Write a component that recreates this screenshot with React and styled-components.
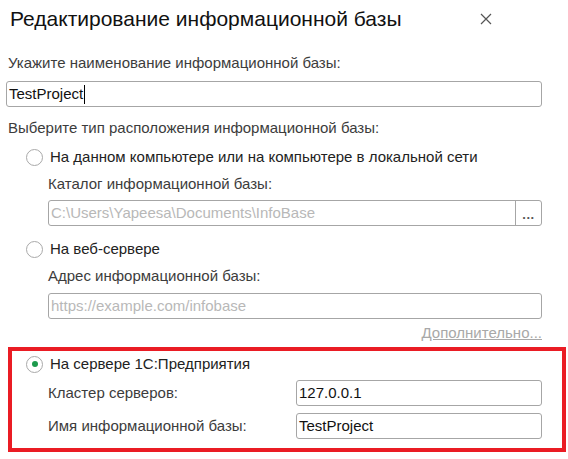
import React from 'react';
import styled, { createGlobalStyle } from 'styled-components';

const GlobalStyle = createGlobalStyle`
  html, body {
    margin: 0;
    padding: 0;
    background: #fff;
  }
  body {
    font-family: "Liberation Sans", Arial, sans-serif;
    color: #333;
  }
`;

function Radio({ checked, label, indent = 20 }) {
  return (
    <RadioRow indent={indent}>
      <Circle checked={checked} />
      <RadioText>{label}</RadioText>
    </RadioRow>
  );
}

export default function App() {
  return (
    <>
      <GlobalStyle />
      <Window>
        <Header>
          <Title>Редактирование информационной базы</Title>
          <Close aria-label="Закрыть">
            <svg width="12" height="12" viewBox="0 0 12 12">
              <path d="M1 1L11 11M11 1L1 11" stroke="#555" strokeWidth="1.2" />
            </svg>
          </Close>
        </Header>

        <Body>
          <Label top={16}>Укажите наименование информационной базы:</Label>
          <Field top={9}>
            <Value>TestProject</Value>
            <Caret />
          </Field>

          <Label top={12}>Выберите тип расположения информационной базы:</Label>

          <Option top={10}>
            <Radio label="На данном компьютере или на компьютере в локальной сети" />
            <Sub>
              <Label top={8}>Каталог информационной базы:</Label>
              <Field top={7}>
                <Placeholder>C:\Users\Yapeesa\Documents\InfoBase</Placeholder>
                <Choose>...</Choose>
              </Field>
            </Sub>
          </Option>

          <Option top={13}>
            <Radio label="На веб-сервере" />
            <Sub>
              <Label top={8}>Адрес информационной базы:</Label>
              <Field top={8}>
                <Placeholder>https://example.com/infobase</Placeholder>
              </Field>
            </Sub>
          </Option>

          <MoreLink href="#">Дополнительно...</MoreLink>
        </Body>

        <Highlight>
          <Radio checked indent={14} label="На сервере 1С:Предприятия" />
          <ServerGrid>
            <GridLabel>Кластер серверов:</GridLabel>
            <Field>
              <Value>127.0.0.1</Value>
            </Field>
            <GridLabel>Имя информационной базы:</GridLabel>
            <Field>
              <Value>TestProject</Value>
            </Field>
          </ServerGrid>
        </Highlight>
      </Window>
    </>
  );
}

const Window = styled.div`
  width: 568px;
  height: 459px;
  box-sizing: border-box;
  padding: 0 2px 0 6px;
  overflow: hidden;
`;

const Header = styled.div`
  height: 38px;
  display: flex;
  align-items: center;
  justify-content: space-between;
  padding-right: 74px;
`;

const Title = styled.h1`
  margin: 0 0 0 4px;
  font-size: 21px;
  line-height: 28px;
  font-weight: normal;
  color: #111;
`;

const Close = styled.button`
  border: none;
  background: none;
  padding: 0;
  width: 12px;
  height: 12px;
  display: flex;
  cursor: pointer;
`;

const Body = styled.div`
  display: flex;
  flex-direction: column;
  padding-right: 24px;
`;

const Label = styled.div`
  margin-top: ${(p) => p.top || 0}px;
  padding-left: 2px;
  font-size: 15px;
  line-height: 18px;
  color: #3c3c3c;
`;

const Field = styled.div`
  margin-top: ${(p) => p.top || 0}px;
  height: 26px;
  box-sizing: border-box;
  border: 1px solid #a6a6a6;
  border-radius: 3px;
  display: flex;
  align-items: center;
  padding-left: 2px;
  font-size: 15px;
  overflow: hidden;
`;

const Value = styled.span`
  color: #111;
  line-height: 18px;
`;

const Caret = styled.span`
  width: 1px;
  height: 19px;
  background: #000;
  margin-left: 1px;
`;

const Placeholder = styled.span`
  flex: 1;
  color: #b8b8b8;
  line-height: 18px;
`;

const Choose = styled.span`
  width: 26px;
  align-self: stretch;
  border-left: 1px solid #a6a6a6;
  display: flex;
  align-items: center;
  justify-content: center;
  font-size: 13px;
  font-weight: bold;
  color: #555;
  letter-spacing: 0.5px;
  padding-top: 3px;
  box-sizing: border-box;
`;

const Option = styled.div`
  margin-top: ${(p) => p.top || 0}px;
  display: flex;
  flex-direction: column;
`;

const RadioRow = styled.div`
  height: 20px;
  display: flex;
  align-items: center;
  gap: 7px;
  padding-left: ${(p) => p.indent}px;
`;

const Circle = styled.span`
  width: 17px;
  height: 17px;
  box-sizing: border-box;
  border-radius: 50%;
  border: 1px solid #a9a9a9;
  background: #fff;
  display: flex;
  align-items: center;
  justify-content: center;
  &::after {
    content: '';
    width: 6px;
    height: 6px;
    border-radius: 50%;
    background: #1c9a4c;
    display: ${(p) => (p.checked ? 'block' : 'none')};
  }
`;

const RadioText = styled.span`
  font-size: 15px;
  line-height: 18px;
  color: #222;
`;

const Sub = styled.div`
  display: flex;
  flex-direction: column;
  padding-left: 42px;
  & > ${Label} {
    padding-left: 0;
  }
`;

const MoreLink = styled.a`
  align-self: flex-end;
  margin-top: 5px;
  font-size: 15px;
  line-height: 18px;
  color: #a8a8a8;
  text-decoration: underline;
`;

const Highlight = styled.div`
  margin: 5px 0 0 2px;
  height: 105px;
  box-sizing: border-box;
  border: 4px solid #ea1c24;
  padding: 3px 20px 0 0;
  display: flex;
  flex-direction: column;
`;

const ServerGrid = styled.div`
  margin-top: 6px;
  padding-left: 36px;
  display: grid;
  grid-template-columns: 248px 1fr;
  row-gap: 7px;
  align-items: center;
`;

const GridLabel = styled.div`
  font-size: 15px;
  line-height: 18px;
  color: #3c3c3c;
`;
